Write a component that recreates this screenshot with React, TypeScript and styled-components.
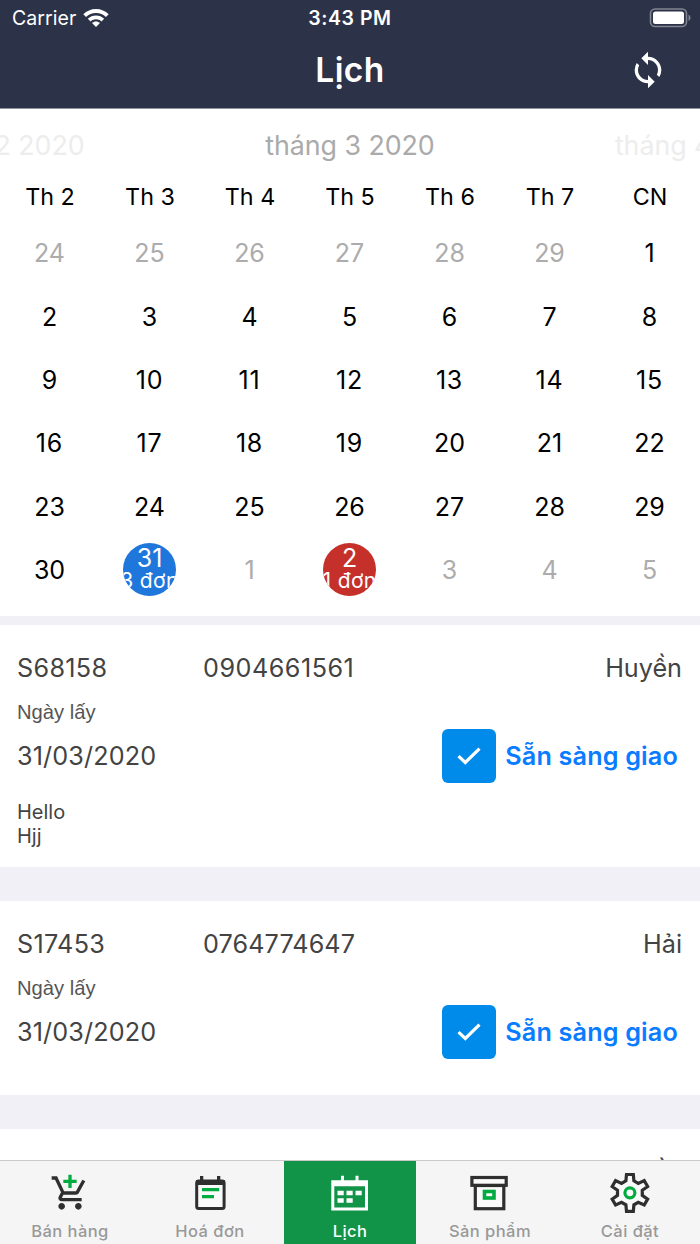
import React from "react";
import styled, { createGlobalStyle } from "styled-components";
import { MdSync } from "react-icons/md";

const GlobalStyle = createGlobalStyle`
  * { box-sizing: border-box; }
  html, body { margin: 0; padding: 0; }
  body { background: #fff; font-family: Inter, "Liberation Sans", sans-serif; }
`;

const Screen = styled.div`
  width: 700px;
  height: 1244px;
  display: flex;
  flex-direction: column;
  overflow: hidden;
  background: #f1f0f6;
`;

const Header = styled.header`
  height: 109px;
  flex: none;
  background: #2c3348;
  border-bottom: 1px solid #8f929e;
  color: #fff;
`;

const StatusBar = styled.div`
  height: 36px;
  display: grid;
  grid-template-columns: 1fr auto 1fr;
  align-items: center;
  padding: 0 9px;
`;

const Carrier = styled.div`
  display: flex;
  align-items: center;
  gap: 7px;
  padding-left: 3px;
  font-size: 19.5px;
  line-height: 36px;
  letter-spacing: 0.05px;
`;

const Clock = styled.div`
  font-size: 19.5px;
  font-weight: 600;
  line-height: 36px;
  letter-spacing: 0.55px;
`;

const BatterySlot = styled.div`
  display: flex;
  justify-content: flex-end;
`;

const NavBar = styled.div`
  height: 68px;
  display: grid;
  grid-template-columns: 1fr auto 1fr;
  align-items: center;
  padding: 0 32px;
`;

const Title = styled.h1`
  grid-column: 2;
  margin: 0;
  font-size: 33.5px;
  font-weight: 600;
  line-height: 66px;
  letter-spacing: 0.4px;
`;

const SyncButton = styled.button`
  justify-self: end;
  display: flex;
  padding: 0;
  border: 0;
  background: none;
  color: #fff;
  font-size: 40px;
`;

const Calendar = styled.section`
  height: 507px;
  flex: none;
  background: #fff;
`;

const MonthStrip = styled.div`
  display: flex;
  justify-content: center;
  height: 72px;
  overflow: hidden;
`;

const Month = styled.div<{ $current?: boolean }>`
  width: 350px;
  flex: none;
  text-align: center;
  font-size: 26.8px;
  line-height: 73px;
  letter-spacing: -0.05px;
  color: ${(p) => (p.$current ? "#aaa" : "#ededed")};
`;

const Weekdays = styled.div`
  display: grid;
  grid-template-columns: repeat(7, 100px);
  height: 40.5px;
`;

const Weekday = styled.div`
  text-align: center;
  font-size: 23.3px;
  line-height: 32px;
`;

const Days = styled.div`
  display: grid;
  grid-template-columns: repeat(7, 100px);
  grid-auto-rows: 63.4px;
  margin-left: -0.5px;
`;

const Day = styled.div<{ $muted?: boolean; $wide?: boolean }>`
  display: flex;
  align-items: center;
  justify-content: center;
  font-size: 25px;
  line-height: 32px;
  letter-spacing: ${(p) => (p.$wide ? 0.8 : 0)}px;
  color: ${(p) => (p.$muted ? "#acacac" : "#000")};
`;

const DayBadge = styled.div<{ $color: string }>`
  width: 53px;
  height: 53px;
  margin-bottom: 1px;
  padding-top: 1px;
  border-radius: 50%;
  overflow: hidden;
  display: flex;
  flex-direction: column;
  align-items: center;
  background: ${(p) => p.$color};
  color: #fff;
`;

const BadgeDay = styled.span`
  font-size: 25px;
  line-height: 28px;
`;

const BadgeCount = styled.span`
  font-size: 21px;
  line-height: 18px;
  white-space: nowrap;
  letter-spacing: 0.4px;
`;

const OrderList = styled.main`
  flex: 1;
  min-height: 0;
  overflow: hidden;
  padding-top: 9px;
  display: flex;
  flex-direction: column;
  gap: 34px;
`;

const Card = styled.article<{ $height: number }>`
  height: ${(p) => p.$height}px;
  flex: none;
  background: #fff;
  padding: 22px 18px 0 17px;
  color: #434343;
`;

const CardHead = styled.div`
  display: grid;
  grid-template-columns: 186px 1fr auto;
  font-size: 25.2px;
  line-height: 42px;
  height: 42px;
`;

const Figures = styled.span<{ $spacing: number }>`
  letter-spacing: ${(p) => p.$spacing}px;
`;

const Name = styled.span`
  grid-column: 3;
`;

const DateLabel = styled.div`
  font-family: "Liberation Sans", sans-serif;
  font-size: 20.2px;
  line-height: 24px;
  margin-top: 11px;
  color: #555;
`;

const PickupRow = styled.div`
  display: flex;
  align-items: center;
  justify-content: space-between;
  height: 54px;
  margin-top: 5px;
  padding-right: 4px;
  font-size: 25.2px;
`;

const Ready = styled.div`
  display: flex;
  align-items: center;
  gap: 9px;
  font-weight: 600;
  letter-spacing: 0.17px;
  color: #0a7cff;
`;

const CheckBox = styled.div`
  width: 54px;
  height: 54px;
  border-radius: 6px;
  background: #008ae9;
  display: flex;
  align-items: center;
  justify-content: center;
`;

const Note = styled.div`
  margin-top: 17px;
  white-space: pre-line;
  font-size: 20px;
  line-height: 24px;
`;

const TabBar = styled.nav`
  height: 84px;
  flex: none;
  display: flex;
  justify-content: space-between;
  border-top: 1px solid #c9cac9;
  background: #f5f5f5;
  padding: 0 4px;
`;

const Tab = styled.button<{ $active?: boolean }>`
  width: 132px;
  padding: 12px 0 0;
  border: 0;
  display: flex;
  flex-direction: column;
  justify-content: flex-start;
  align-items: center;
  font: 500 16.5px/36px Inter, sans-serif;
  letter-spacing: 0.45px;
  background: ${(p) => (p.$active ? "#119447" : "transparent")};
  color: ${(p) => (p.$active ? "#fff" : "#999")};

  svg {
    flex: none;
  }
`;

const ink = "#2f2f2f";
const green = "#00ab3f";

const WifiIcon = () => (
  <svg width="26" height="19" viewBox="0 0 26 19" fill="#fff">
    <path d="M13 0C18 0 22.4 2 25.7 5.2L22.9 8C20.3 5.5 16.9 4 13 4S5.700 5.500 3.100 8L.3 5.200C3.600 2 8 0 13 0Z" />
    <path d="M13 6.400C16.200 6.400 19 7.600 21.200 9.700L18.400 12.400C17 11.100 15.100 10.300 13 10.300S9 11.100 7.600 12.400L4.800 9.700C7 7.600 9.800 6.400 13 6.400Z" />
    <path d="M13 12.500C14.600 12.500 16 13.100 17 14.100L13 18.100L9 14.100C10 13.100 11.400 12.500 13 12.500Z" />
  </svg>
);

const BatteryIcon = () => (
  <svg width="42" height="20" viewBox="0 0 42 20">
    <rect x="1.500" y="1" width="36" height="17.500" rx="4.500" fill="none" stroke="#81858f" strokeWidth="1.600" />
    <rect x="4" y="3.500" width="31" height="12.500" rx="2.500" fill="#fff" />
    <path d="M39.500 6.500Q41.500 7.500 41.500 9.700T39.500 13Z" fill="#81858f" />
  </svg>
);

const CheckIcon = () => (
  <svg width="26" height="20" viewBox="0 0 26 20" fill="none" stroke="#fff" strokeWidth="3.200">
    <path d="M2.500 10.200L9.300 16.500L23.500 2.700" />
  </svg>
);

const CartIcon = () => (
  <svg width="40" height="40" viewBox="0 0 24 24">
    <path fill={green} d="M11 9h2V6h3V4h-3V1h-2v3H8v2h3v3z" />
    <path
      fill={ink}
      d="M7 18c-1.100 0-1.990.9-1.990 2S5.900 22 7 22s2-.9 2-2-.9-2-2-2zm10 0c-1.100 0-1.990.9-1.990 2s.89 2 1.990 2 2-.9 2-2-.9-2-2-2zm-9.830-3.250l.03-.12.9-1.630h7.450c.75 0 1.410-.41 1.750-1.030l3.860-7.010L19.420 4h-.01l-1.100 2-2.760 5H8.530l-.13-.27L6.160 6l-.95-2-.94-2H1v2h2l3.600 7.590-1.350 2.450c-.16.28-.25.61-.25.96 0 1.100.9 2 2 2h12v-2H7.420c-.13 0-.25-.11-.25-.25z"
    />
  </svg>
);

const InvoiceIcon = () => (
  <svg width="40" height="40" viewBox="0 0 40 40">
    <rect x="6.700" y="8" width="27.400" height="27.500" rx="2" fill="#fafafa" stroke={ink} strokeWidth="3" />
    <path fill={ink} d="M6 7H34.800V12H6ZM10 3H13.300V8H10ZM27 3H30.300V8H27Z" />
    <path fill={green} d="M12 15H29.200V18.300H12ZM12 22H24V25.200H12Z" />
  </svg>
);

const CalendarIcon = () => (
  <svg width="40" height="40" viewBox="0 0 40 40" fill="#fff">
    <path fillRule="evenodd" d="M1.300 7.300H38V37.500H1.300ZM4.300 13.300V34.500H35V13.300Z" />
    <path d="M11 2.700H14V8H11ZM25.500 2.700H28.500V8H25.500Z" />
    <path d="M7.500 17.700H13.700V22.300H7.500ZM16.500 17.700H22.700V22.300H16.500ZM25.500 17.700H31.700V22.300H25.500ZM7.500 25.300H13.700V29.700H7.500ZM16.500 25.300H22.700V29.700H16.500Z" />
  </svg>
);

const BoxIcon = () => (
  <svg width="40" height="40" viewBox="0 0 40 40" strokeWidth="3.200">
    <rect x="5.300" y="12.500" width="28.500" height="23.200" fill="#fafafa" stroke={ink} />
    <rect x="1.900" y="4.500" width="34.300" height="7.800" fill="#fafafa" stroke={ink} />
    <rect x="14.500" y="18.500" width="9.500" height="6.500" fill="#fff" stroke={green} strokeWidth="3.600" />
  </svg>
);

const gearTooth = [
  [-4, 12],
  [-3.4, 18.5],
  [3.4, 18.5],
  [4, 12],
];

const gearPath =
  [0, 60, 120, 180, 240, 300]
    .flatMap((deg) =>
      gearTooth.map(([p, r]) => {
        const a = (deg * Math.PI) / 180;
        const x = 19.9 + r * Math.sin(a) + p * Math.cos(a);
        const y = 19.8 - r * Math.cos(a) + p * Math.sin(a);
        return `${x.toFixed(2)} ${y.toFixed(2)}`;
      })
    )
    .reduce((d, pt, i) => d + (i ? "L" : "M") + pt, "") + "Z";

const GearIcon = () => (
  <svg width="41" height="40" viewBox="0 0 41 40" fill="none">
    <path d={gearPath} fill="#fafafa" stroke={ink} strokeWidth="3.200" />
    <circle cx="19.900" cy="19.800" r="5" stroke={green} strokeWidth="3.200" />
  </svg>
);

const weekdays = ["Th 2", "Th 3", "Th 4", "Th 5", "Th 6", "Th 7", "CN"];

type DayInfo = { day: number; muted?: boolean; badge?: { color: string; count: number } };

const days: DayInfo[] = [
  ...[24, 25, 26, 27, 28, 29].map((day) => ({ day, muted: true })),
  ...Array.from({ length: 30 }, (_, i) => ({ day: i + 1 })),
  { day: 31, badge: { color: "#1f77dc", count: 3 } },
  { day: 1, muted: true },
  { day: 2, badge: { color: "#c6302b", count: 1 } },
  ...[3, 4, 5].map((day) => ({ day, muted: true })),
];

type Order = { code: string; phone: string; name: string; date: string; note?: string; height: number };

const orders: Order[] = [
  { code: "S68158", phone: "0904661561", name: "Huyền", date: "31/03/2020", note: "Hello\nHjj", height: 242 },
  { code: "S17453", phone: "0764774647", name: "Hải", date: "31/03/2020", height: 194 },
];

const tabs = [
  { label: "Bán hàng", Icon: CartIcon },
  { label: "Hoá đơn", Icon: InvoiceIcon },
  { label: "Lịch", Icon: CalendarIcon, active: true },
  { label: "Sản phẩm", Icon: BoxIcon },
  { label: "Cài đặt", Icon: GearIcon },
];

const tracking = (text: string) => 0.1 + 0.2 * (text.split("1").length - 1);

const OrderCard = ({ order }: { order: Order }) => (
  <Card $height={order.height}>
    <CardHead>
      <Figures $spacing={tracking(order.code)}>{order.code}</Figures>
      <Figures $spacing={tracking(order.phone)}>{order.phone}</Figures>
      <Name>{order.name}</Name>
    </CardHead>
    <DateLabel>Ngày lấy</DateLabel>
    <PickupRow>
      <Figures $spacing={0.15}>{order.date}</Figures>
      <Ready>
        <CheckBox>
          <CheckIcon />
        </CheckBox>
        <span>Sẵn sàng giao</span>
      </Ready>
    </PickupRow>
    {order.note && <Note>{order.note}</Note>}
  </Card>
);

export default function App() {
  return (
    <Screen>
      <GlobalStyle />
      <Header>
        <StatusBar>
          <Carrier>
            Carrier
            <WifiIcon />
          </Carrier>
          <Clock>3:43 PM</Clock>
          <BatterySlot>
            <BatteryIcon />
          </BatterySlot>
        </StatusBar>
        <NavBar>
          <Title>Lịch</Title>
          <SyncButton aria-label="Sync">
            <MdSync />
          </SyncButton>
        </NavBar>
      </Header>
      <Calendar>
        <MonthStrip>
          <Month>tháng 2 2020</Month>
          <Month $current>tháng 3 2020</Month>
          <Month>tháng 4 2020</Month>
        </MonthStrip>
        <Weekdays>
          {weekdays.map((w) => (
            <Weekday key={w}>{w}</Weekday>
          ))}
        </Weekdays>
        <Days>
          {days.map(({ day, muted, badge }, i) => (
            <Day key={i} $muted={muted} $wide={day > 9 && day < 20}>
              {badge ? (
                <DayBadge $color={badge.color}>
                  <BadgeDay>{day}</BadgeDay>
                  <BadgeCount>{badge.count} đơn</BadgeCount>
                </DayBadge>
              ) : (
                day
              )}
            </Day>
          ))}
        </Days>
      </Calendar>
      <OrderList>
        {orders.map((order) => (
          <OrderCard key={order.code} order={order} />
        ))}
        <Card $height={194}>
          <CardHead>
            <Name>Huyền</Name>
          </CardHead>
        </Card>
      </OrderList>
      <TabBar>
        {tabs.map(({ label, Icon, active }) => (
          <Tab key={label} $active={active}>
            <Icon />
            {label}
          </Tab>
        ))}
      </TabBar>
    </Screen>
  );
}
